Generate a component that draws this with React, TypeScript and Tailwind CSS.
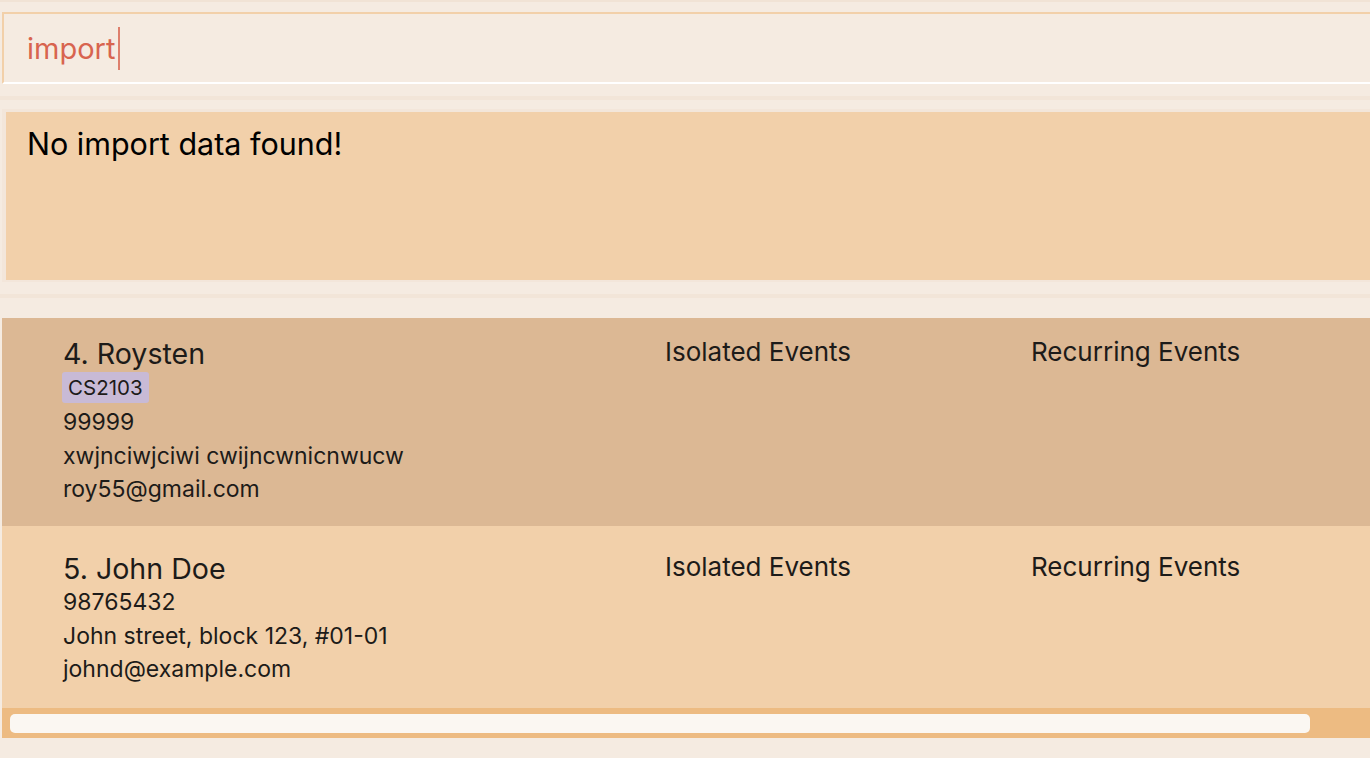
import type { ReactNode } from 'react';

type Person = {
  index: number;
  name: string;
  tags: string[];
  phone: string;
  address: string;
  email: string;
};

const people: Person[] = [
  {
    index: 4,
    name: 'Roysten',
    tags: ['CS2103'],
    phone: '99999',
    address: 'xwjnciwjciwi cwijncwnicnwucw',
    email: 'roy55@gmail.com',
  },
  {
    index: 5,
    name: 'John Doe',
    tags: [],
    phone: '98765432',
    address: 'John street, block 123, #01-01',
    email: 'johnd@example.com',
  },
];

const font = "font-['Inter','Liberation_Sans',sans-serif]";

function PersonCard({ person, selected, clipTop }: { person: Person; selected?: boolean; clipTop?: boolean }) {
  return (
    <div
      className={`flex text-[#1d1b19] ${selected ? 'bg-[#dcb894]' : 'bg-[#f2d0aa]'} ${clipTop ? 'h-[208px] pt-[19px]' : 'h-[182px] pt-[26px]'}`}
    >
      {/* Details */}
      <div className="w-[663px] pl-[61px] flex flex-col">
        <p className="text-[28.6px] leading-[34px]">
          {person.index}. {person.name}
        </p>
        {person.tags.length > 0 && (
          <div className="flex gap-2 -ml-[1px] mt-[1px] mb-[3px]">
            {person.tags.map((t) => (
              <span key={t} className="bg-[#c8bad6] rounded-[3px] px-[6px] text-[20.5px] leading-[31px]">
                {t}
              </span>
            ))}
          </div>
        )}
        <p className="text-[23px] leading-[33.5px]">{person.phone}</p>
        <p className="text-[23px] leading-[33.5px]">{person.address}</p>
        <p className="text-[23px] leading-[33.5px]">{person.email}</p>
      </div>
      <div className="w-[366px]">
        <p className="text-[26px] leading-[30px]">Isolated Events</p>
      </div>
      <div className="flex-1">
        <p className="text-[26px] leading-[30px]">Recurring Events</p>
      </div>
    </div>
  );
}

function Band({ className, children }: { className: string; children?: ReactNode }) {
  return <div className={className}>{children}</div>;
}

export default function App() {
  return (
    <div className={`w-[1370px] h-[758px] overflow-hidden bg-[#f5ebe1] flex flex-col ${font}`}>
      <Band className="h-[2px] bg-[#f1e3d5]" />
      <Band className="h-[10px]" />

      {/* Command box */}
      <div className="ml-[2px] h-[72px] border-t-2 border-l-2 border-[#f2d0a9] border-b-2 border-b-white flex items-center pl-[23px]">
        <span className="text-[29px] text-[#d8644f] leading-none">import</span>
        <span className="w-[2px] h-[43px] bg-[#d8644f] ml-[3px] opacity-80" />
      </div>

      <Band className="h-[12px]" />
      <Band className="h-[4px] bg-[#f2e5d8]" />
      <Band className="h-[9px]" />

      {/* Result display */}
      <div className="ml-[2px] border-l-4 border-t-[3px] border-b-2 border-[#f3e6da]">
        <div className="h-[168px] bg-[#f2d0aa] px-[21px] pt-[12px]">
          <p className="text-[30.5px] leading-[40px] text-black">No import data found!</p>
        </div>
      </div>

      <Band className="h-[12px]" />
      <Band className="h-[4px] bg-[#f2e5d8]" />
      <Band className="h-[20px]" />

      {/* Person list */}
      <div className="ml-[2px] flex flex-col">
        <PersonCard person={people[0]} selected clipTop />
        <PersonCard person={people[1]} />
        <div className="h-[30px] bg-[#edbb82] pt-[6px] pl-[8px]">
          <div className="w-[1300px] h-[19px] bg-[#fbf7f2] rounded-[5px]" />
        </div>
      </div>
    </div>
  );
}
